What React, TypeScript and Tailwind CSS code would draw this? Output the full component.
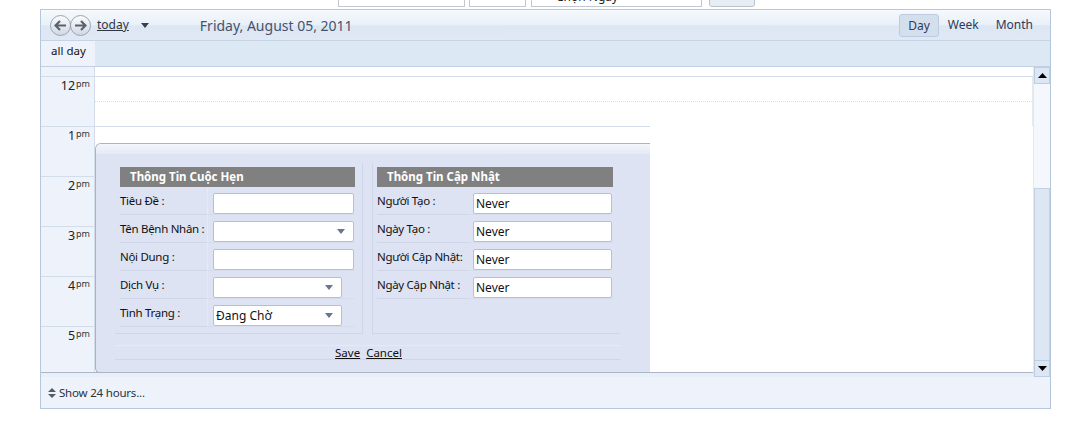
import React from "react";

const ui = "font-['Noto_Sans',sans-serif]";

function Caret({ className = "" }: { className?: string }) {
	return (
		<svg width="8" height="5" viewBox="0 0 8 5" className={className}>
			<path d="M0 0h8L4 5z" fill="currentColor" />
		</svg>
	);
}

function NavButtons() {
	const btn =
		"w-[21px] h-[21px] rounded-full border border-[#9aa4b4] bg-gradient-to-b from-[#fafbfd] to-[#d3d9e3] flex items-center justify-center";
	return (
		<div className="flex">
			<span className={btn}>
				<svg width="13" height="11" viewBox="0 0 13 11">
					<path d="M12 5.5H2M6 1L1.5 5.5 6 10" stroke="#5a6270" strokeWidth="2.2" fill="none" />
				</svg>
			</span>
			<span className={btn + " -ml-[1px]"}>
				<svg width="13" height="11" viewBox="0 0 13 11">
					<path d="M1 5.5h10M7 1l4.5 4.5L7 10" stroke="#5a6270" strokeWidth="2.2" fill="none" />
				</svg>
			</span>
		</div>
	);
}

function Field({ width, select, value }: { width: number; select?: boolean; value?: string }) {
	return (
		<div
			className="h-[21px] bg-white border border-[#b4c0d6] rounded-[2px] flex items-center pl-[2px] pr-[8px] text-[12px] text-[#111]"
			style={{ width }}
		>
			<span className="flex-1 leading-none pt-[1px]">{value}</span>
			{select && <Caret className="text-[#6a7590]" />}
		</div>
	);
}

const leftRows = [
	{ label: "Tiêu Đề :", w: 141 },
	{ label: "Tên Bệnh Nhân :", w: 141, select: true },
	{ label: "Nội Dung :", w: 141 },
	{ label: "Dịch Vụ :", w: 129, select: true },
	{ label: "Tình Trạng :", w: 129, select: true, value: "Đang Chờ" },
];

const rightRows = ["Người Tạo :", "Ngày Tạo :", "Người Cập Nhật:", "Ngày Cập Nhật :"];

function EditPopup() {
	return (
		<div className="w-[555px] h-[231px] border border-[#a3b5c8] border-r-0 rounded-l-[6px] bg-[#dde3f2] overflow-hidden">
			<div className="h-[10px] bg-gradient-to-b from-[#f4f6fb] to-[#e4e9f5]" />
			<div className="pl-[19px] pt-[9px]">
				<div className="flex gap-[9px]">
					{/* Thông tin cuộc hẹn */}
					<div className="w-[248px] h-[171px] border-r border-b border-[#cfd6e8] pl-[5px] pt-[4px]">
						<div className="w-[235px] h-[20px] bg-[#808080] text-white text-[11.5px] font-bold pl-[10px] leading-[20px]">
							Thông Tin Cuộc Hẹn
						</div>
						{leftRows.map((r) => (
							<div key={r.label} className="flex h-[28px]">
								<div className="w-[88px] border-b border-[#cfd6e8] border-r border-r-[#e6eaf5] pt-[6px] text-[11.5px] text-[#111] leading-[16px] whitespace-nowrap tracking-[-0.3px]">
									{r.label}
								</div>
								<div className="w-[147px] border-b border-[#d6dcec] pl-[5px] flex items-end">
									<Field width={r.w} select={r.select} value={r.value} />
								</div>
							</div>
						))}
					</div>
					{/* Thông tin cập nhật */}
					<div className="w-[248px] h-[171px] border-l border-b border-[#cfd6e8] pl-[4px] pt-[4px]">
						<div className="w-[236px] h-[20px] bg-[#808080] text-white text-[11.5px] font-bold pl-[10px] leading-[20px]">
							Thông Tin Cập Nhật
						</div>
						{rightRows.map((l) => (
							<div key={l} className="flex h-[28px]">
								<div className="w-[90px] border-b border-[#cfd6e8] pt-[6px] text-[11.5px] text-[#111] leading-[16px] whitespace-nowrap tracking-[-0.3px]">
									{l}
								</div>
								<div className="w-[146px] border-b border-[#d6dcec] pl-[6px] flex items-end">
									<Field width={139} value="Never" />
								</div>
							</div>
						))}
					</div>
				</div>
				<div className="w-[505px] mt-[11px] border-t border-[#e6eaf5] border-b border-b-[#cfd6e8] h-[15px] flex justify-center gap-[6px] text-[11.5px] text-[#111] leading-[14px] pl-[2px]">
					<span className="underline">Save</span>
					<span className="underline">Cancel</span>
				</div>
			</div>
		</div>
	);
}

const hours = ["12", "1", "2", "3", "4", "5"];

export default function App() {
	return (
		<div className={`${ui} w-[1075px] h-[434px] bg-white relative overflow-hidden`}>
			{/* clipped search bar above the calendar */}
			<div className="h-[9px] overflow-hidden">
				<div className="flex items-end -mt-[15px] text-[12px]">
					<div className="ml-[338px] w-[127px] h-[21px] border border-[#c0c8d4] bg-white" />
					<div className="ml-[4px] w-[57px] h-[21px] border border-[#c0c8d4] bg-white" />
					<div className="ml-[5px] w-[171px] h-[21px] border border-[#c0c8d4] bg-white pl-[24px] leading-[20px] text-[#222]">
						Chọn Ngày
					</div>
					<div className="ml-[7px] w-[46px] h-[22px] border border-[#b8c2d0] rounded-[3px] bg-[#e8edf4] text-center leading-[20px] text-[#222]">
						Button
					</div>
				</div>
			</div>

			<div className="ml-[40px] w-[1011px] border border-[#b7c7db]">
				{/* toolbar */}
				<div className="h-[31px] border-b border-[#c6d3e3] bg-[linear-gradient(#f6f9fd,#e9f0f8_50%,#dde7f3_52%,#dfe8f4)] flex items-center pl-[9px] pr-[17px]">
					<NavButtons />
					<span className="ml-[6px] text-[12px] text-[#2f3644] underline">today</span>
					<Caret className="ml-[12px] text-[#3a3f4a]" />
					<span className="ml-[51px] text-[14px] text-[#46536e]">Friday, August 05, 2011</span>
					<div className="ml-auto flex items-center text-[12px] text-[#2e3a58]">
						<span className="h-[23px] px-[8px] leading-[22px] rounded-[3px] border border-[#bccbdd] bg-[#d4dfee]">Day</span>
						<span className="ml-[9px]">Week</span>
						<span className="ml-[17px]">Month</span>
					</div>
				</div>
				{/* all day row */}
				<div className="h-[26px] flex border-b border-[#c3d0e2]">
					<div className="w-[54px] bg-[#eef3fb] text-[11.5px] text-[#111] pl-[10px] pt-[1px]">all day</div>
					<div className="flex-1 bg-[#dde8f5]" />
				</div>
				{/* scrolling body */}
				<div className="h-[310px] flex">
					<div className="flex-1 flex flex-col">
						<div className="h-[306px] flex overflow-hidden border-b border-[#aab6c6]">
							<div className="w-[54px] bg-[#eef3fb] border-r border-[#d3dce9] shrink-0">
								<div className="h-[10px] border-b border-[#d3dce9]" />
								{hours.map((h) => (
									<div key={h} className="h-[50px] border-b border-[#d3dce9] flex justify-end pr-[4px] pt-[2px]">
										<span className="text-[12.5px] text-[#222] leading-[14px]">{h}</span>
										<span className="text-[9px] text-[#333] leading-[9px] ml-[1px]">pm</span>
									</div>
								))}
							</div>
							<div className="flex-1 bg-white">
								<div className="h-[10px] border-b border-[#d3dce9]" />
								<div className="h-[49px] border-r border-[#e3e9f1]">
									<div className="h-[25px] border-b border-dotted border-[#d9dee6]" />
								</div>
								<div className="w-[555px] border-t border-[#d3dce9] pt-[16px]">
									<EditPopup />
								</div>
							</div>
						</div>
						<div className="flex-1 bg-[#e9eff8]" />
					</div>
					{/* scrollbar */}
					<div className="w-[17px] border-l border-[#e3e9f1] flex flex-col">
						<div className="h-[17px] bg-[#dde6f3] border border-[#bfcde0] flex items-center justify-center">
							<svg width="9" height="5" viewBox="0 0 9 5">
								<path d="M0 5h9L4.5 0z" fill="#000" />
							</svg>
						</div>
						<div className="h-[104px] bg-[#f4f8fd]" />
						<div className="h-[172px] bg-[#dde6f3] border-x border-t border-[#c4d1e3]" />
						<div className="flex-1 bg-[#dde6f3] border border-[#bfcde0] flex items-center justify-center">
							<svg width="9" height="5" viewBox="0 0 9 5">
								<path d="M0 0h9L4.5 5z" fill="#000" />
							</svg>
						</div>
					</div>
				</div>
				{/* footer */}
				<div className="h-[31px] bg-[#eef3fb] flex items-center pl-[7px] text-[11.5px] tracking-[-0.2px] text-[#2a3140]">
					<svg width="8" height="12" viewBox="0 0 8 12" className="mr-[3px]">
						<path d="M0 5h8L4 1zM0 7h8L4 11z" fill="#555c68" />
					</svg>
					Show 24 hours...
				</div>
			</div>
		</div>
	);
}
